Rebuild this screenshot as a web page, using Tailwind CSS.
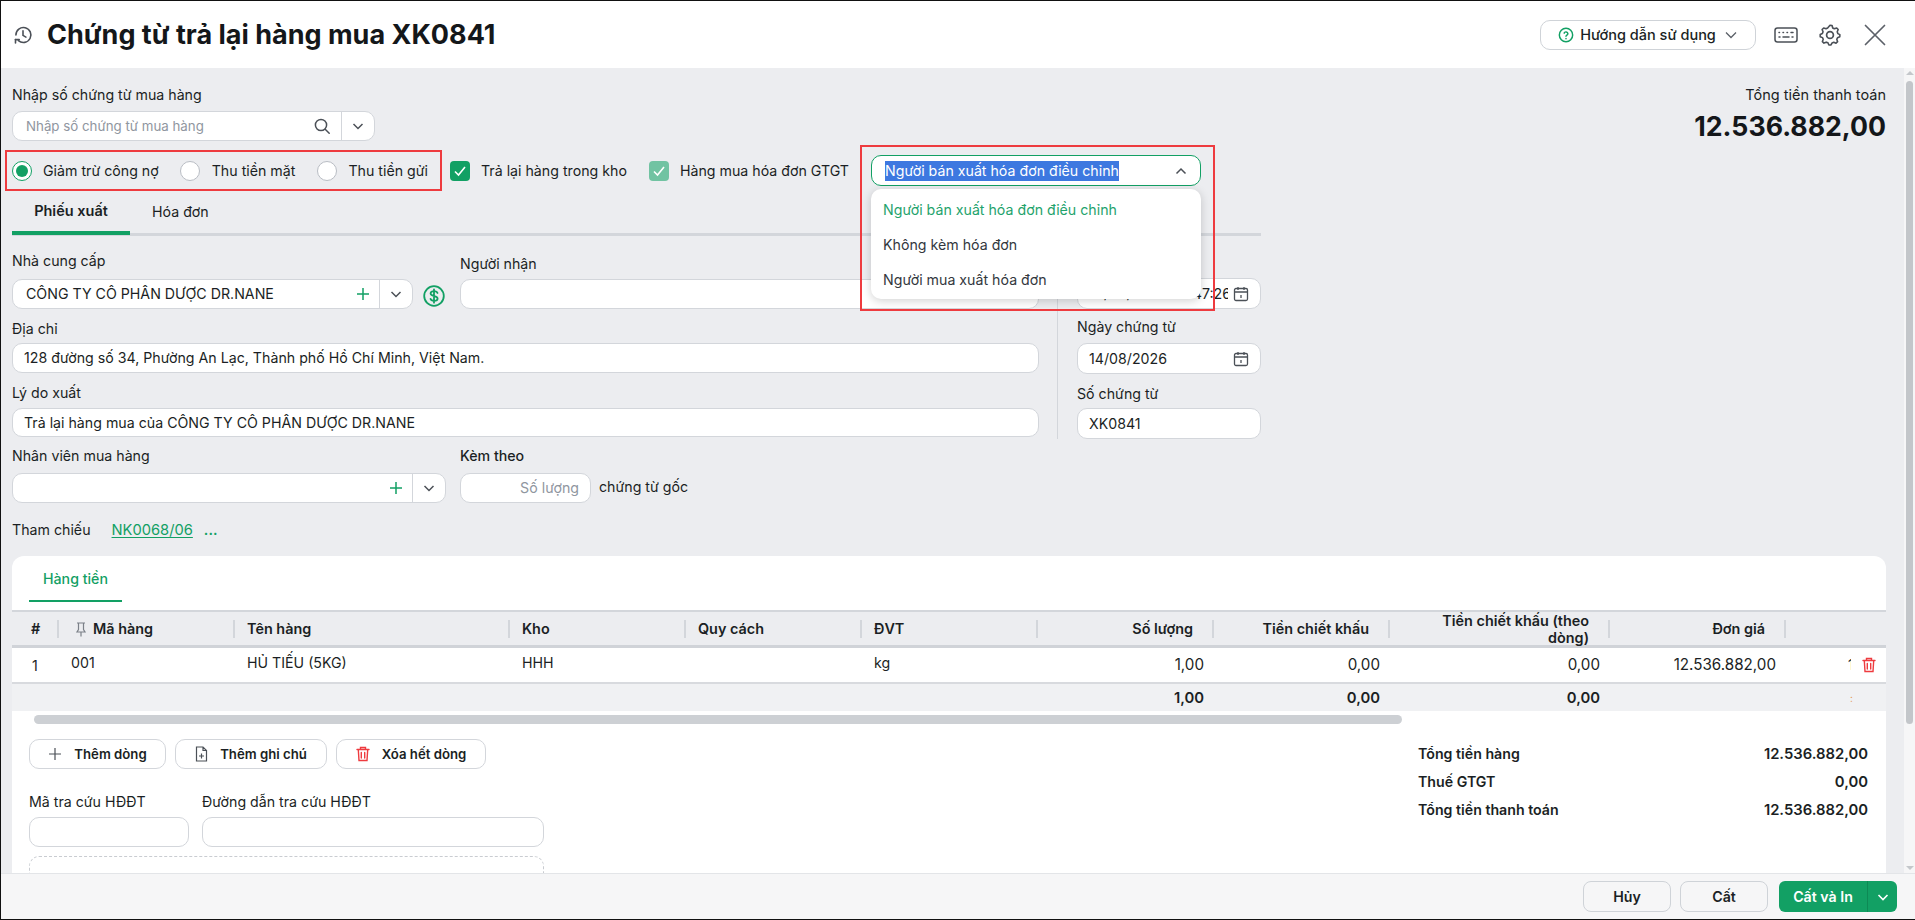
<!DOCTYPE html>
<html lang="vi">
<head>
<meta charset="utf-8">
<title>Chứng từ trả lại hàng mua XK0841</title>
<script src="https://cdn.jsdelivr.net/npm/@tailwindcss/browser@4"></script>
</head>
<body class="bg-white">
<div class="relative w-[1915px] h-[920px] overflow-hidden flex flex-col border-t border-l border-b border-[#111] bg-white font-['Inter','Noto_Sans',sans-serif] text-[14.2px] leading-5 text-[#1b1f24]">

  <!-- Header -->
  <header class="h-[67px] shrink-0 flex items-center bg-white pl-[12px] pr-[29px]">
    <svg class="w-[20px] h-[20px] text-[#4b5057]" viewBox="0 0 24 24" fill="none" stroke="currentColor" stroke-width="1.9" stroke-linecap="round" stroke-linejoin="round"><path d="M3.5 12a9 9 0 1 1 3 6.7"/><path d="M3 17.5v4"/><path d="M3 17.5h4.5"/><path d="M12 7v5.5l3.5 2"/></svg>
    <h1 class="ml-[14px] text-[27px] leading-9 font-bold text-[#14171a] whitespace-nowrap">Chứng từ trả lại hàng mua XK0841</h1>
    <div class="ml-auto flex items-center">
      <button class="w-[216px] h-[30px] flex items-center justify-center gap-[6px] bg-white border border-[#cfd3d8] rounded-[10px] font-medium text-[14.5px]">
        <svg class="w-[16px] h-[16px] text-[#12a064]" viewBox="0 0 24 24" fill="none" stroke="currentColor" stroke-width="2.2" stroke-linecap="round"><circle cx="12" cy="12" r="10"/><path d="M9.2 9.2a2.9 2.9 0 0 1 5.6.8c0 2-2.8 2.4-2.8 4"/><path d="M12 17.4v.1"/></svg>
        <span>Hướng dẫn sử dụng</span>
        <svg class="ml-[2px] w-[14px] h-[14px] text-[#5b6068]" viewBox="0 0 14 14" fill="none" stroke="currentColor" stroke-width="1.3"><path d="M2 4.5l5 5 5-5"/></svg>
      </button>
      <svg class="ml-[18px] w-[24px] h-[16px] text-[#4b5057]" viewBox="0 0 24 16" fill="none" stroke="currentColor" stroke-width="1.5" stroke-linecap="round"><rect x="1" y="1" width="22" height="14" rx="2.5"/><path d="M5 5.5h.5M9 5.5h.5M13 5.5h.5M17 5.5h2M5 10h1M9 10h6M18 10h1"/></svg>
      <svg class="ml-[20px] w-[24px] h-[24px] text-[#4b5057]" viewBox="0 0 24 24" fill="none" stroke="currentColor" stroke-width="1.7" stroke-linejoin="round"><path d="M12 2l2.2.3.7 2.6 1.7.9 2.5-.9 1.6 1.7-1 2.4.6 1.9 2.2 1.1-.1 2.3-2.4 1-.8 1.7.9 2.5-1.7 1.6-2.4-1-1.8.7-1.1 2.2-2.3 0-1-2.3-1.8-.7-2.4 1-1.7-1.6.9-2.5-.8-1.7-2.4-1v-2.3l2.3-1 .7-1.9-1-2.4 1.7-1.7 2.5.9 1.7-.9z" transform="translate(12 12) scale(.94) translate(-12 -12.4)"/><circle cx="12" cy="12" r="3.4"/></svg>
      <svg class="ml-[22px] w-[22px] h-[22px] text-[#5b6068]" viewBox="0 0 22 22" fill="none" stroke="currentColor" stroke-width="1.7" stroke-linecap="round"><path d="M1.5 1.5l19 19M20.5 1.5l-19 19"/></svg>
    </div>
  </header>

  <!-- Main -->
  <div class="flex-1 min-h-0 flex">
    <main class="relative w-[1903px] shrink-0 overflow-hidden bg-[#ecedf0] pl-[11px]">
      <!-- top -->
      <div class="flex justify-between w-[1874px] pt-[17px]">
        <div>
          <div class="h-5 mb-[6px]">Nhập số chứng từ mua hàng</div>
          <div class="w-[363px] h-[30px] flex items-center bg-white border border-[#d3d6db] rounded-[10px]">
            <span class="flex-1 pl-[13px] text-[13.3px] text-[#9096a0]">Nhập số chứng từ mua hàng</span>
            <svg class="w-[18px] h-[18px] mr-[10px] text-[#4b5057]" viewBox="0 0 18 18" fill="none" stroke="currentColor" stroke-width="1.5" stroke-linecap="round"><circle cx="8" cy="8" r="5.6"/><path d="M12.2 12.2l4 4"/></svg>
            <span class="w-[33px] h-full flex items-center justify-center border-l border-[#d3d6db]">
              <svg class="w-[12px] h-[12px] text-[#4b5057]" viewBox="0 0 12 12" fill="none" stroke="currentColor" stroke-width="1.5"><path d="M1.5 4l4.5 4.5L10.500 4"/></svg>
            </span>
          </div>
        </div>
        <div class="text-right h-[56px]">
          <div class="h-5 text-[14.5px]">Tổng tiền thanh toán</div>
          <div class="mt-[3px] text-[26.7px] leading-9 font-bold text-[#14171a]">12.536.882,00</div>
        </div>
      </div>

      <!-- options row -->
      <div class="flex items-center mt-[9px] h-[41px]">
        <div class="ml-[-7px] w-[437px] h-[41px] flex items-center border-2 border-[#ee3b3f] pl-[5px]">
          <span class="w-5 h-5 rounded-full border border-[#12a064] bg-white flex items-center justify-center"><span class="w-[12px] h-[12px] rounded-full bg-[#12a064]"></span></span>
          <span class="ml-[11px]">Giảm trừ công nợ</span>
          <span class="ml-[21px] w-5 h-5 rounded-full border border-[#b9bdc4] bg-white"></span>
          <span class="ml-[12px]">Thu tiền mặt</span>
          <span class="ml-[22px] w-5 h-5 rounded-full border border-[#b9bdc4] bg-white"></span>
          <span class="ml-[11px]">Thu tiền gửi</span>
        </div>
        <span class="ml-[8px] w-5 h-5 rounded-[4px] bg-[#12a064] flex items-center justify-center">
          <svg class="w-[14px] h-[14px] text-white" viewBox="0 0 14 14" fill="none" stroke="currentColor" stroke-width="1.6"><path d="M2 7.500l3.500 3.500L12 3"/></svg>
        </span>
        <span class="ml-[11px]">Trả lại hàng trong kho</span>
        <span class="ml-[22px] w-5 h-5 rounded-[4px] bg-[#71c3a2] flex items-center justify-center">
          <svg class="w-[14px] h-[14px] text-white" viewBox="0 0 14 14" fill="none" stroke="currentColor" stroke-width="1.6"><path d="M2 7.500l3.500 3.500L12 3"/></svg>
        </span>
        <span class="ml-[11px]">Hàng mua hóa đơn GTGT</span>
      </div>

      <!-- tabs -->
      <div class="flex items-start w-[1249px] h-[45px] border-b-[3px] border-[#d3d6db]">
        <div class="w-[118px] h-[44px] border-b-4 border-[#12a064] flex items-center justify-center font-semibold text-[14.5px]">Phiếu xuất</div>
        <div class="ml-[22px] h-[42px] flex items-center">Hóa đơn</div>
      </div>

      <!-- form -->
      <div class="flex w-[1249px]">
        <div class="w-[1027px] pb-0">
          <div class="flex items-end mt-[15px]">
            <div class="w-[448px]">
              <div class="h-5 mb-[8px]">Nhà cung cấp</div>
              <div class="flex items-center">
                <div class="w-[401px] h-[30px] flex items-center bg-white border border-[#d3d6db] rounded-[10px]">
                  <span class="flex-1 pl-[13px]">CÔNG TY CÔ PHÂN DƯỢC DR.NANE</span>
                  <svg class="w-[14px] h-[14px] mr-[9px] text-[#12a064]" viewBox="0 0 14 14" fill="none" stroke="currentColor" stroke-width="1.5"><path d="M7 1v12M1 7h12"/></svg>
                  <span class="w-[33px] h-full flex items-center justify-center border-l border-[#d3d6db]">
                    <svg class="w-[12px] h-[12px] text-[#4b5057]" viewBox="0 0 12 12" fill="none" stroke="currentColor" stroke-width="1.500"><path d="M1.500 4l4.500 4.500L10.500 4"/></svg>
                  </span>
                </div>
                <svg class="ml-[10px] mt-[4px] w-[22px] h-[22px] text-[#12a064]" viewBox="0 0 22 22" fill="none" stroke="currentColor" stroke-width="1.8" stroke-linecap="round"><circle cx="11" cy="11" r="9.800"/><path d="M14.500 8c-.4-1.300-1.800-1.900-3.500-1.900-2 0-3.400 1-3.400 2.500 0 3.300 7 1.600 7 4.900 0 1.500-1.500 2.400-3.600 2.400-1.800 0-3.100-.7-3.500-2.100M11 4.300v13.400"/></svg>
              </div>
            </div>
            <div class="w-[579px]">
              <div class="h-5 mb-[5px]">Người nhận</div>
              <div class="w-[579px] h-[30px] bg-white border border-[#d3d6db] rounded-[10px]"></div>
            </div>
          </div>

          <div class="h-5 mt-[10px] mb-[4px]">Địa chỉ</div>
          <div class="w-[1027px] h-[30px] flex items-center bg-white border border-[#d3d6db] rounded-[10px] pl-[11px]">128 đường số 34, Phường An Lạc, Thành phố Hồ Chí Minh, Việt Nam.</div>

          <div class="h-5 mt-[10px] mb-[5px]">Lý do xuất</div>
          <div class="w-[1027px] h-[29px] flex items-center bg-white border border-[#d3d6db] rounded-[10px] pl-[11px]">Trả lại hàng mua của CÔNG TY CÔ PHÂN DƯỢC DR.NANE</div>

          <div class="flex mt-[9px]">
            <div class="w-[448px]">
              <div class="h-5 mb-[7px]">Nhân viên mua hàng</div>
              <div class="w-[434px] h-[30px] flex items-center justify-end bg-white border border-[#d3d6db] rounded-[10px]">
                <svg class="w-[14px] h-[14px] mr-[9px] text-[#12a064]" viewBox="0 0 14 14" fill="none" stroke="currentColor" stroke-width="1.500"><path d="M7 1v12M1 7h12"/></svg>
                <span class="w-[33px] h-full flex items-center justify-center border-l border-[#d3d6db]">
                  <svg class="w-[12px] h-[12px] text-[#4b5057]" viewBox="0 0 12 12" fill="none" stroke="currentColor" stroke-width="1.500"><path d="M1.500 4l4.500 4.500L10.500 4"/></svg>
                </span>
              </div>
            </div>
            <div>
              <div class="h-5 mb-[7px] font-medium">Kèm theo</div>
              <div class="flex items-center">
                <div class="w-[131px] h-[30px] flex items-center justify-end bg-white border border-[#d3d6db] rounded-[10px] pr-[11px] text-[#9096a0]">Số lượng</div>
                <span class="ml-[8px] mt-[-3px]">chứng từ gốc</span>
              </div>
            </div>
          </div>
        </div>

        <div class="ml-[18px] mt-[15px] self-start h-[188px] w-px bg-[#d3d6db]"></div>

        <div class="ml-[19px] w-[184px]">
          <div class="h-5 mt-[15px] mb-[7px]">Ngày hạch toán</div>
          <div class="w-[184px] h-[31px] flex items-center bg-white border border-[#d3d6db] rounded-[10px] pl-[11px] pr-[11px]">
            <span class="w-[139px] h-5 overflow-hidden whitespace-nowrap">14/08/2026 09:47:26</span>
            <svg class="ml-auto w-[16px] h-[16px] text-[#4b5057]" viewBox="0 0 16 16" fill="none" stroke="currentColor" stroke-width="1.300"><rect x="1.500" y="2.500" width="13" height="12" rx="1.500"/><path d="M1.500 6h13M5 1v3M11 1v3M8 9v3"/></svg>
          </div>
          <div class="h-5 mt-[8px] mb-[6px]">Ngày chứng từ</div>
          <div class="w-[184px] h-[31px] flex items-center bg-white border border-[#d3d6db] rounded-[10px] pl-[11px] pr-[11px]">
            <span>14/08/2026</span>
            <svg class="ml-auto w-[16px] h-[16px] text-[#4b5057]" viewBox="0 0 16 16" fill="none" stroke="currentColor" stroke-width="1.300"><rect x="1.500" y="2.500" width="13" height="12" rx="1.500"/><path d="M1.500 6h13M5 1v3M11 1v3M8 9v3"/></svg>
          </div>
          <div class="h-5 mt-[10px] mb-[4px]">Số chứng từ</div>
          <div class="w-[184px] h-[31px] flex items-center bg-white border border-[#d3d6db] rounded-[10px] pl-[11px]">XK0841</div>
        </div>
      </div>

      <!-- reference -->
      <div class="flex items-center h-5 mt-[17px]">
        <span>Tham chiếu</span>
        <span class="ml-[21px] text-[14.7px] text-[#12a064] underline underline-offset-2">NK0068/06</span>
        <span class="ml-[11px] text-[#12a064] font-semibold">...</span>
      </div>

      <!-- card -->
      <section class="mt-[16px] w-[1874px] bg-white rounded-t-[12px]">
        <div class="ml-[17px] w-[93px] h-[46px] pt-[2px] flex items-center justify-center border-b-2 border-[#12a064] text-[#12a064] font-medium">Hàng tiền</div>
        <div class="mt-[8px] border-t-2 border-[#d3d6db]">
          <div class="grid grid-cols-[47px_176px_275px_176px_176px_176px_176px_176px_220px_176px_100px] h-[36px] bg-[#ecedf0] border-b-[3px] border-[#d0d3d8] font-semibold text-[14.4px] items-center">
            <div class="flex items-center h-full"><span class="flex-1 pl-[19px]">#</span><span class="w-[2px] h-[18px] bg-[#d3d6db]"></span></div>
            <div class="flex items-center h-full pl-[16px]">
              <svg class="w-[12px] h-[15px] text-[#7b8088] mr-[6px]" viewBox="0 0 12 15" fill="none" stroke="currentColor" stroke-width="1.200"><path d="M2 1h8M3.500 1v6.500L2 10h8L8.500 7.500V1M6 10v4.500"/></svg>
              <span class="flex-1">Mã hàng</span><span class="w-[2px] h-[18px] bg-[#d3d6db]"></span></div>
            <div class="flex items-center h-full pl-3"><span class="flex-1">Tên hàng</span><span class="w-[2px] h-[18px] bg-[#d3d6db]"></span></div>
            <div class="flex items-center h-full pl-3"><span class="flex-1">Kho</span><span class="w-[2px] h-[18px] bg-[#d3d6db]"></span></div>
            <div class="flex items-center h-full pl-3"><span class="flex-1">Quy cách</span><span class="w-[2px] h-[18px] bg-[#d3d6db]"></span></div>
            <div class="flex items-center h-full pl-3"><span class="flex-1">ĐVT</span><span class="w-[2px] h-[18px] bg-[#d3d6db]"></span></div>
            <div class="flex items-center h-full pl-3"><span class="flex-1 text-right pr-[19px]">Số lượng</span><span class="w-[2px] h-[18px] bg-[#d3d6db]"></span></div>
            <div class="flex items-center h-full pl-3"><span class="flex-1 text-right pr-[19px]">Tiền chiết khấu</span><span class="w-[2px] h-[18px] bg-[#d3d6db]"></span></div>
            <div class="flex items-center h-full pl-3"><span class="flex-1 text-right pr-[19px] leading-[17px]">Tiền chiết khấu (theo<br>dòng)</span><span class="w-[2px] h-[18px] bg-[#d3d6db]"></span></div>
            <div class="flex items-center h-full pl-3"><span class="flex-1 text-right pr-[19px]">Đơn giá</span><span class="w-[2px] h-[18px] bg-[#d3d6db]"></span></div>
            <div></div>
          </div>
          <div class="grid grid-cols-[47px_176px_275px_176px_176px_176px_176px_176px_220px_176px_100px] h-[36px] border-b-2 border-[#d8dade] bg-white items-center">
            <div class="pl-[20px] pt-[1px]">1</div>
            <div class="pl-[12px] mt-[-5px]">001</div>
            <div class="pl-3 mt-[-4px]">HỦ TIẾU (5KG)</div>
            <div class="pl-3 mt-[-5px]">HHH</div>
            <div></div>
            <div class="pl-3 mt-[-5px]">kg</div>
            <div class="text-right pr-[10px] text-[15.2px]">1,00</div>
            <div class="text-right pr-[10px] text-[15.2px]">0,00</div>
            <div class="text-right pr-[10px] text-[15.2px]">0,00</div>
            <div class="text-right pr-[10px] text-[15.2px]">12.536.882,00</div>
            <div class="flex items-center justify-end pr-[10px]">
              <span class="w-[3px] h-5 overflow-hidden mr-[11px]">1</span>
              <svg class="w-[14px] h-[16px] text-[#ee3b3f]" viewBox="0 0 14 16" fill="none" stroke="currentColor" stroke-width="1.400" stroke-linecap="round"><path d="M1 3.500h12M4.500 3.500V1.500h5v2M2.300 3.500l.7 11h8l.7-11M5.300 6.500v5.500M8.700 6.500v5.500"/></svg>
            </div>
          </div>
          <div class="grid grid-cols-[47px_176px_275px_176px_176px_176px_176px_176px_220px_176px_100px] h-[27px] bg-[#f0f1f3] items-center font-semibold text-[14.8px]">
            <div></div><div></div><div></div><div></div><div></div><div></div>
            <div class="text-right pr-[10px]">1,00</div>
            <div class="text-right pr-[10px]">0,00</div>
            <div class="text-right pr-[10px]">0,00</div>
            <div></div>
            <div class="pl-[64px] text-[#e39a5b] font-normal text-[10px]">:</div>
          </div>
        </div>
        <div class="ml-[22px] mt-[4px] w-[1368px] h-[9px] rounded-full bg-[#cdd0d4]"></div>

        <div class="flex justify-between">
          <div class="pl-[17px]">
            <div class="flex gap-[9px] mt-[15px] font-semibold text-[13.2px]">
              <button class="w-[137px] h-[30px] flex items-center justify-center gap-[12px] bg-white border border-[#d3d6db] rounded-[10px]">
                <svg class="w-[14px] h-[14px] text-[#4b5057]" viewBox="0 0 14 14" fill="none" stroke="currentColor" stroke-width="1.200"><path d="M7 1v12M1 7h12"/></svg>
                <span>Thêm dòng</span>
              </button>
              <button class="w-[152px] h-[30px] flex items-center justify-center gap-[12px] bg-white border border-[#d3d6db] rounded-[10px]">
                <svg class="w-[13px] h-[16px] text-[#4b5057]" viewBox="0 0 13 16" fill="none" stroke="currentColor" stroke-width="1.200"><path d="M1.500 1h6.500l3.500 3.500V15h-10zM8 1v3.500h3.500M6.500 7.500v5M4 10h5"/></svg>
                <span>Thêm ghi chú</span>
              </button>
              <button class="w-[150px] h-[30px] flex items-center justify-center gap-[12px] bg-white border border-[#d3d6db] rounded-[10px]">
                <svg class="w-[14px] h-[16px] text-[#ee3b3f]" viewBox="0 0 14 16" fill="none" stroke="currentColor" stroke-width="1.400" stroke-linecap="round"><path d="M1 3.500h12M4.500 3.500V1.500h5v2M2.300 3.500l.7 11h8l.7-11M5.300 6.500v5.500M8.700 6.500v5.500"/></svg>
                <span>Xóa hết dòng</span>
              </button>
            </div>
            <div class="flex gap-[13px] mt-[23px]">
              <div class="w-[160px]">
                <div class="h-5 mb-[5px] whitespace-nowrap">Mã tra cứu HĐĐT</div>
                <div class="h-[30px] bg-white border border-[#d3d6db] rounded-[10px]"></div>
              </div>
              <div class="w-[342px]">
                <div class="h-5 mb-[5px]">Đường dẫn tra cứu HĐĐT</div>
                <div class="h-[30px] bg-white border border-[#d3d6db] rounded-[10px]"></div>
              </div>
            </div>
            <div class="mt-[9px] w-[515px] h-[80px] border border-dashed border-[#c9ccd1] rounded-[10px]"></div>
          </div>
          <div class="w-[450px] mr-[18px] mt-[16px] font-semibold text-[14.8px]">
            <div class="flex justify-between items-center h-[28px]"><span class="text-[14.2px]">Tổng tiền hàng</span><span>12.536.882,00</span></div>
            <div class="flex justify-between items-center h-[28px]"><span class="text-[14.2px]">Thuế GTGT</span><span>0,00</span></div>
            <div class="flex justify-between items-center h-[28px]"><span class="text-[14.2px]">Tổng tiền thanh toán</span><span>12.536.882,00</span></div>
          </div>
        </div>
      </section>

      <!-- select + dropdown overlay -->
      <div class="absolute left-[859px] top-[77px] w-[355px] h-[166px] border-2 border-[#ee3b3f] z-20 pointer-events-none"></div>
      <div class="absolute left-[870px] top-[87px] w-[330px] h-[31px] flex items-center bg-white border border-[#12a064] rounded-[10px] pl-[13px] pr-[13px] z-10">
        <span class="bg-[#3d78e0] text-white whitespace-nowrap">Người bán xuất hóa đơn điều chỉnh</span>
        <svg class="ml-auto w-[12px] h-[12px] text-[#4b5057]" viewBox="0 0 12 12" fill="none" stroke="currentColor" stroke-width="1.500"><path d="M1.500 8.500L6 4l4.500 4.500"/></svg>
      </div>
      <div class="absolute left-[870px] top-[121px] w-[330px] h-[110px] flex flex-col justify-center pt-[2px] bg-white rounded-[10px] shadow-[0_2px_10px_rgba(0,0,0,0.18)] z-10 pl-[12px]">
        <div class="h-[35px] flex items-center text-[#1fa36d]">Người bán xuất hóa đơn điều chỉnh</div>
        <div class="h-[35px] flex items-center text-[#33383e]">Không kèm hóa đơn</div>
        <div class="h-[35px] flex items-center text-[#33383e]">Người mua xuất hóa đơn</div>
      </div>
    </main>

    <!-- page scrollbar -->
    <div class="flex-1 bg-[#f6f6f7] flex flex-col items-center justify-between py-[3px]">
      <div class="w-0 h-0 border-x-[4px] border-x-transparent border-b-[4px] border-b-[#c4c7cb]"></div>
      <div class="absolute top-[80px] w-[7px] h-[643px] rounded-full bg-[#c3c6ca]"></div>
      <div class="w-0 h-0 border-x-[4px] border-x-transparent border-t-[4px] border-t-[#c4c7cb]"></div>
    </div>
  </div>

  <!-- Footer -->
  <footer class="h-[46px] shrink-0 flex items-center justify-end gap-[9px] bg-[#f6f6f7] border-t border-[#e3e5e8] pr-[18px] font-semibold">
    <button class="w-[88px] h-[31px] flex items-center justify-center bg-[#f6f6f7] border border-[#cfd3d8] rounded-[8px]">Hủy</button>
    <button class="w-[88px] h-[31px] flex items-center justify-center bg-[#f6f6f7] border border-[#cfd3d8] rounded-[8px]">Cất</button>
    <div class="ml-[2px] w-[118px] h-[31px] flex items-center bg-[#12a064] rounded-[6px] text-white">
      <span class="w-[88px] text-center">Cất và In</span>
      <span class="flex-1 h-full flex items-center justify-center border-l border-[#0d8a55]">
        <svg class="w-[12px] h-[12px]" viewBox="0 0 12 12" fill="none" stroke="currentColor" stroke-width="1.600"><path d="M1.500 4l4.500 4.500L10.500 4"/></svg>
      </span>
    </div>
  </footer>
</div>
</body>
</html>
